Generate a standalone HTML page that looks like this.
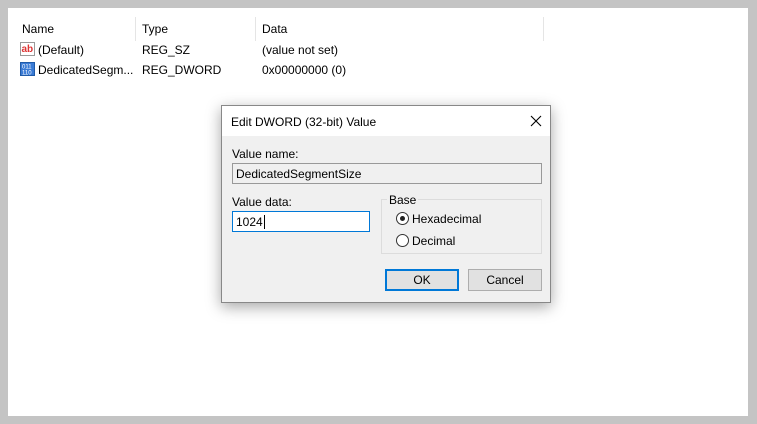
<!DOCTYPE html>
<html><head><style>
*{margin:0;padding:0;box-sizing:border-box}
body{width:757px;height:424px;background:#c4c4c4;font-family:"Liberation Sans",sans-serif;font-size:12px;color:#000;position:relative;overflow:hidden}
.panel{position:absolute;left:8px;top:8px;width:740px;height:408px;background:#fff}
.a{position:absolute;white-space:nowrap}
.sep{position:absolute;top:17px;width:1px;height:24px;background:#e5e5e5}
.dlg{position:absolute;left:221px;top:105px;width:330px;height:198px;background:#f0f0f0;border:1px solid #888;box-shadow:0 4px 14px rgba(0,0,0,.35)}
.tb{position:absolute;left:0;top:0;width:328px;height:30px;background:#fff}
.btn{position:absolute;height:22px;background:#e1e1e1;border:1px solid #adadad;text-align:center;line-height:20px}
.rad{position:absolute;width:13px;height:13px;border:1px solid #333;border-radius:50%;background:#fff}
</style></head><body>
<div class="panel"></div>
<div class="a" style="left:22px;top:22px">Name</div>
<div class="a" style="left:142px;top:22px">Type</div>
<div class="a" style="left:262px;top:22px">Data</div>
<div class="sep" style="left:135px"></div>
<div class="sep" style="left:255px"></div>
<div class="sep" style="left:543px"></div>
<svg class="a" style="left:20px;top:42px" width="16" height="15"><rect x="0.5" y="0.5" width="14" height="13" fill="#fff" stroke="#999"/><text x="1.5" y="10" font-size="10" font-weight="bold" fill="#d33" font-family="Liberation Sans">ab</text></svg>
<div class="a" style="left:38px;top:43px">(Default)</div>
<div class="a" style="left:142px;top:43px">REG_SZ</div>
<div class="a" style="left:262px;top:43px">(value not set)</div>
<svg class="a" style="left:20px;top:62px" width="16" height="15"><rect x="0.5" y="0.5" width="14" height="13" fill="#3a7bd5" stroke="#1f5aa8"/><text x="2" y="6.5" font-size="6" fill="#fff" font-family="Liberation Sans">011</text><text x="2" y="12.5" font-size="6" fill="#fff" font-family="Liberation Sans">110</text></svg>
<div class="a" style="left:38px;top:63px">DedicatedSegm...</div>
<div class="a" style="left:142px;top:63px">REG_DWORD</div>
<div class="a" style="left:262px;top:63px">0x00000000 (0)</div>

<div class="dlg">
 <div class="tb"></div>
 <div class="a" style="left:9px;top:9px">Edit DWORD (32-bit) Value</div>
 <svg class="a" style="left:308px;top:9px" width="12" height="12"><path d="M1 1L11 11M11 1L1 11" stroke="#000" stroke-width="1.1"/></svg>
 <div class="a" style="left:10px;top:41px">Value name:</div>
 <div class="a" style="left:10px;top:57px;width:310px;height:21px;border:1px solid #999;background:#f0f0f0;padding:3px 0 0 3px">DedicatedSegmentSize</div>
 <div class="a" style="left:10px;top:89px">Value data:</div>
 <div class="a" style="left:10px;top:105px;width:138px;height:21px;border:1px solid #0078d7;background:#fff;padding:3px 0 0 3px">1024<span style="border-left:1px solid #000;margin-left:1px"></span></div>
 <div class="a" style="left:159px;top:93px;width:161px;height:55px;border:1px solid #dcdcdc"></div>
 <div class="a" style="left:165px;top:87px;background:#f0f0f0;padding:0 2px">Base</div>
 <div class="rad" style="left:174px;top:106px"><div style="position:absolute;left:3px;top:3px;width:5px;height:5px;border-radius:50%;background:#222"></div></div>
 <div class="a" style="left:190px;top:106px">Hexadecimal</div>
 <div class="rad" style="left:174px;top:128px"></div>
 <div class="a" style="left:190px;top:128px">Decimal</div>
 <div class="btn" style="left:163px;top:163px;width:74px;border:2px solid #0078d7;line-height:18px">OK</div>
 <div class="btn" style="left:246px;top:163px;width:74px">Cancel</div>
</div>
</body></html>
